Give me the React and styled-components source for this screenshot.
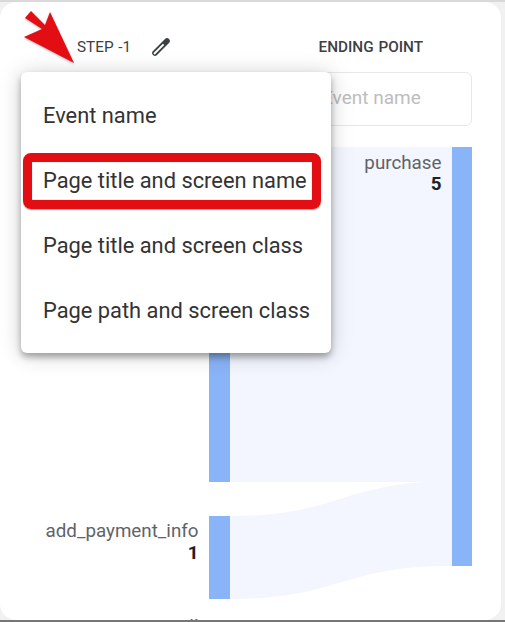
import React from "react";
import styled, { createGlobalStyle } from "styled-components";

const Global = createGlobalStyle`
  html, body { margin: 0; padding: 0; background: #f0f0f0; }
  body { font-family: Roboto, "Liberation Sans", sans-serif; }
`;

const Page = styled.div`
  width: 505px;
  height: 622px;
  box-sizing: border-box;
  padding: 0 4px 0 0;
  background: #f1f1f1;
  border-top: 2px solid #d9d9d9;
  border-bottom: 2px solid #767676;
  overflow: hidden;
`;

const Card = styled.div`
  position: relative;
  width: 501px;
  height: 618px;
  background: #fff;
  border-radius: 16px;
  overflow: hidden;
  display: flex;
  flex-direction: column;
`;

const Header = styled.div`
  display: flex;
  justify-content: space-between;
  align-items: center;
  height: 34px;
  margin-top: 28px;
  padding: 0 78px 0 77px;
`;

const StepGroup = styled.div`
  display: flex;
  align-items: center;
  gap: 20px;
`;

const ColumnTitle = styled.span`
  font-size: 15.3px;
  font-weight: ${(p) => (p.$strong ? 500 : 400)};
  color: #3c4043;
  word-spacing: 1px;
`;

const FieldRow = styled.div`
  display: flex;
  justify-content: flex-end;
  margin-top: 8px;
  padding-right: 29px;
`;

const Field = styled.div`
  width: 172px;
  height: 54px;
  box-sizing: border-box;
  display: flex;
  align-items: center;
  padding: 0 0 3px 21px;
  border: 1px solid #e8e8e8;
  border-radius: 6px;
  font-size: 19px;
  color: #bdbdbd;
`;

const Chart = styled.svg`
  display: block;
  width: 501px;
  height: 473px;
  margin-top: 21px;
  flex: none;
`;

const FlowLabel = styled.text`
  font-family: Roboto, "Liberation Sans", sans-serif;
  font-size: 18.8px;
  fill: ${(p) => (p.$value ? "#202124" : "#5f6368")};
  font-weight: ${(p) => (p.$value ? 700 : 400)};
  text-anchor: end;
`;

const Menu = styled.ul`
  position: absolute;
  left: 21px;
  top: 70px;
  width: 310px;
  margin: 0;
  padding: 10.5px 0;
  box-sizing: border-box;
  list-style: none;
  background: #fff;
  border-radius: 6px;
  box-shadow: 0 4px 6px rgba(0, 0, 0, 0.3), 0 2px 22px rgba(0, 0, 0, 0.2);
`;

const MenuItem = styled.li`
  height: 65px;
  display: flex;
  align-items: center;
  padding-left: 22px;
  font-size: 21.85px;
  color: #333;
  white-space: nowrap;
`;

const Highlight = styled.div`
  position: absolute;
  left: 2px;
  top: 81px;
  width: 298px;
  height: 56px;
  box-sizing: border-box;
  border: 9.5px solid #e30e14;
  border-radius: 8px;
  box-shadow: 0 1px 1px rgba(0, 0, 0, 0.35), inset 0 0 1px rgba(0, 0, 0, 0.5);
  pointer-events: none;
`;

const Arrow = styled.svg`
  position: absolute;
  left: 0;
  top: -2px;
  width: 90px;
  height: 80px;
  overflow: visible;
  filter: drop-shadow(0 1px 1px rgba(0, 0, 0, 0.3));
`;

const PencilIcon = () => (
  <svg width="20" height="20" viewBox="0 0 20 20" fill="none" aria-hidden="true">
    <path d="M4 16 L16 4" stroke="#3c4043" strokeWidth="5.6" strokeLinecap="round" />
    <path d="M3 17 L12.6 7.4" stroke="#fff" strokeWidth="1.9" />
  </svg>
);

const items = [
  "Event name",
  "Page title and screen name",
  "Page title and screen class",
  "Page path and screen class",
];

export default function App() {
  return (
    <>
      <Global />
      <Page>
        <Card>
          <Header>
            <StepGroup>
              <ColumnTitle>STEP -1</ColumnTitle>
              <PencilIcon />
            </StepGroup>
            <ColumnTitle $strong>ENDING POINT</ColumnTitle>
          </Header>
          <FieldRow>
            <Field>Event name</Field>
          </FieldRow>
          <Chart viewBox="0 147 501 473">
            <rect x="230" y="147" width="222" height="335" fill="#f3f6fe" />
            <path
              d="M230 516 C340 516 340 482 452 481 L452 566 C340 566 340 599 230 599 Z"
              fill="#f3f6fe"
            />
            <rect x="209" y="147" width="21" height="335" fill="#8ab4f8" />
            <rect x="209" y="516" width="21" height="83" fill="#8ab4f8" />
            <rect x="452" y="147" width="20" height="419" fill="#8ab4f8" />
            <FlowLabel x="441.5" y="169">purchase</FlowLabel>
            <FlowLabel x="441.5" y="190" $value>5</FlowLabel>
            <FlowLabel x="198.5" y="537">add_payment_info</FlowLabel>
            <FlowLabel x="198.5" y="559" $value>1</FlowLabel>
            <FlowLabel x="198.5" y="633">ll</FlowLabel>
          </Chart>
          <Menu>
            {items.map((item) => (
              <MenuItem key={item}>{item}</MenuItem>
            ))}
            <Highlight />
          </Menu>
          <Arrow viewBox="0 0 90 80" aria-hidden="true">
            <polygon points="31,11 45,25 50,12 74,63 24,37 42,29 25,18" fill="#e30e14" />
          </Arrow>
        </Card>
      </Page>
    </>
  );
}
